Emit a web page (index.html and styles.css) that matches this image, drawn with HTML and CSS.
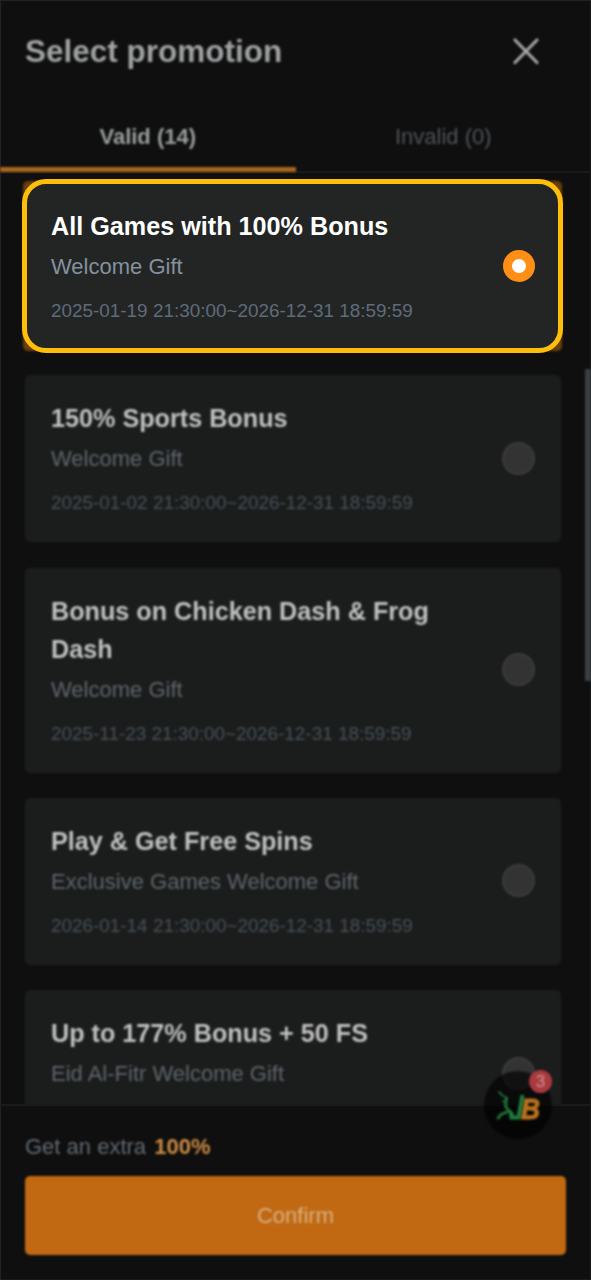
FILE: index.html
```html
<!DOCTYPE html>
<html lang="en">
<head>
<meta charset="utf-8">
<title>Select promotion</title>
<link rel="stylesheet" href="styles.css">
</head>
<body>
<div class="sheet">
  <header class="header soft">
    <h1 class="title">Select promotion</h1>
    <svg class="close" width="28" height="28" viewBox="0 0 28 28"><path d="M3 3 25 25.500M25 3 3 25.500"/></svg>
  </header>
  <nav class="tabs">
    <div class="tab tab-active"><span class="soft">Valid (14)</span></div>
    <div class="tab"><span class="soft">Invalid (0)</span></div>
  </nav>
  <main class="list">
    <div class="spotlight">
      <article class="card card-selected">
        <div class="info">
          <h2 class="name">All Games with 100% Bonus</h2>
          <p class="kind">Welcome Gift</p>
          <p class="dates">2025-01-19 21:30:00~2026-12-31 18:59:59</p>
        </div>
        <span class="radio radio-on"></span>
      </article>
    </div>
    <article class="card soft">
      <div class="info">
        <h2 class="name">150% Sports Bonus</h2>
        <p class="kind">Welcome Gift</p>
        <p class="dates">2025-01-02 21:30:00~2026-12-31 18:59:59</p>
      </div>
      <span class="radio"></span>
    </article>
    <article class="card soft">
      <div class="info">
        <h2 class="name">Bonus on Chicken Dash &amp; Frog Dash</h2>
        <p class="kind">Welcome Gift</p>
        <p class="dates">2025-11-23 21:30:00~2026-12-31 18:59:59</p>
      </div>
      <span class="radio"></span>
    </article>
    <article class="card soft">
      <div class="info">
        <h2 class="name">Play &amp; Get Free Spins</h2>
        <p class="kind">Exclusive Games Welcome Gift</p>
        <p class="dates">2026-01-14 21:30:00~2026-12-31 18:59:59</p>
      </div>
      <span class="radio"></span>
    </article>
    <article class="card soft">
      <div class="info">
        <h2 class="name">Up to 177% Bonus + 50 FS</h2>
        <p class="kind">Eid Al-Fitr Welcome Gift</p>
      </div>
      <span class="radio"></span>
    </article>
    <div class="scrollbar soft"></div>
  </main>
  <footer class="footer">
    <p class="extra soft">Get an extra <b>100%</b></p>
    <button class="confirm soft">Confirm</button>
  </footer>
  <div class="fab soft">
    <svg class="logo" width="68" height="68" viewBox="0 0 68 68">
      <path class="runner-thin" d="M14.500 20.500 19 25 23 26.500M18.500 31 23.500 28"/>
      <path class="runner" d="M22.500 26 21.500 35 25 40 17 43.500 13.500 48M25 39 29 44.500"/>
      <path class="runner-leg" d="M38.500 24 34.500 46.500 27.500 46.500 27 41"/>
      <text class="logo-b" x="37" y="47.500" textLength="19" lengthAdjust="spacingAndGlyphs">B</text>
    </svg>
    <span class="badge">3</span>
  </div>
</div>
</body>
</html>
```
FILE: styles.css
```css
* { box-sizing: border-box; margin: 0; padding: 0; }

body {
  width: 591px;
  height: 1280px;
  background: #0f0f0f;
  font-family: "Liberation Sans", Arial, sans-serif;
  overflow: hidden;
}

.sheet {
  position: relative;
  height: 1280px;
  display: flex;
  flex-direction: column;
  box-shadow: inset 1px 1px 1px #242526, inset -1px -1px 1px #1b1c1d;
}

.soft { filter: blur(1.2px); }

.header {
  height: 102px;
  padding: 0 51px 0 25px;
  display: flex;
  align-items: center;
  justify-content: space-between;
}

.title { font-size: 31.5px; line-height: 40px; color: #a0a2a3; }
.close { fill: none; stroke: #a6a6a6; stroke-width: 3.2; stroke-linecap: round; }

.tabs {
  height: 71px;
  display: flex;
  border-bottom: 2px solid #181919;
}

.tab {
  flex: 1;
  display: flex;
  justify-content: center;
  padding-top: 21px;
  font-size: 22px;
  line-height: 28px;
  color: #4e5459;
  position: relative;
}

.tab-active { font-weight: bold; color: #9c9e9f; }

.tab-active::after {
  content: "";
  position: absolute;
  left: 0;
  right: 0;
  bottom: -1px;
  height: 5px;
  background: #a8651e;
  filter: blur(0.9px);
}

.list {
  position: relative;
  flex: 1;
  min-height: 0;
  padding: 10px 30px 0 25px;
  display: flex;
  flex-direction: column;
  gap: 25.3px;
  overflow: hidden;
}

.spotlight { position: relative; }

.spotlight::before {
  content: "";
  position: absolute;
  inset: -2px -1px -1px -2px;
  border-radius: 5px;
  background: #6a3f0d;
  filter: blur(1px);
}

.card {
  flex: none;
  display: flex;
  align-items: center;
  justify-content: space-between;
  min-height: 167px;
  padding: 24px 26px 25px;
  border-radius: 5px;
  background: #1b1d1c;
}

.info { width: 400px; align-self: flex-start; }
.name { font-size: 25.2px; line-height: 38px; color: #c0c0c0; }
.kind { margin-top: 6px; font-size: 22px; line-height: 32px; color: #5e656c; }
.dates { margin-top: 14px; font-size: 18.9px; line-height: 28px; color: #465059; }

.radio {
  flex: none;
  width: 33px;
  height: 33px;
  border-radius: 50%;
  background: #333;
  border: 2px solid #3b3b3b;
}

.card-selected {
  position: relative;
  margin: -4px -2px -3px -3px;
  padding: 23px 23px 23px 24px;
  border: 5px solid #ffbe0b;
  border-radius: 24px;
  background: #232524;
}

.card-selected .info { margin-top: 0; }
.card-selected .name { color: #fff; }
.card-selected .kind { color: #84919e; }
.card-selected .dates { color: #5e6c7b; }

.radio-on {
  width: 32px;
  height: 32px;
  background: #fff;
  border: 9.5px solid #ff8e16;
}

.scrollbar {
  position: absolute;
  right: 0;
  top: 196px;
  width: 6px;
  height: 312px;
  background: #3a3f43;
}

.footer {
  height: 176px;
  padding: 27px 25px 0;
  border-top: 2px solid #191a1a;
}

.extra { font-size: 22px; line-height: 28px; color: #626b74; }
.extra b { margin-left: 2px; color: #ce8c44; }

.confirm {
  display: block;
  width: 541px;
  height: 79px;
  margin-top: 15px;
  border: 0;
  border-radius: 5px;
  background: #c06912;
  color: #dcb084;
  font: 22px "Liberation Sans", Arial, sans-serif;
}

/* Floating launcher over the list and footer */
.fab {
  position: absolute;
  left: 484px;
  top: 1071px;
  width: 68px;
  height: 68px;
  border-radius: 50%;
  background: rgba(0, 0, 0, 0.65);
}

.logo { display: block; }
.runner { fill: none; stroke: #1d7038; stroke-width: 3; }
.runner-thin { fill: none; stroke: #1d7038; stroke-width: 1.8; }
.runner-leg { fill: none; stroke: #1d7d3d; stroke-width: 4; }
.logo-b {
  font: italic bold 29px "Liberation Sans", Arial, sans-serif;
  fill: #b97120;
  stroke: #b97120;
  stroke-width: 1;
}

.badge {
  position: absolute;
  left: 45px;
  top: -1px;
  width: 23px;
  height: 23px;
  border-radius: 50%;
  background: #a93a3f;
  color: #d09496;
  font-size: 17px;
  line-height: 23px;
  text-align: center;
}
```
